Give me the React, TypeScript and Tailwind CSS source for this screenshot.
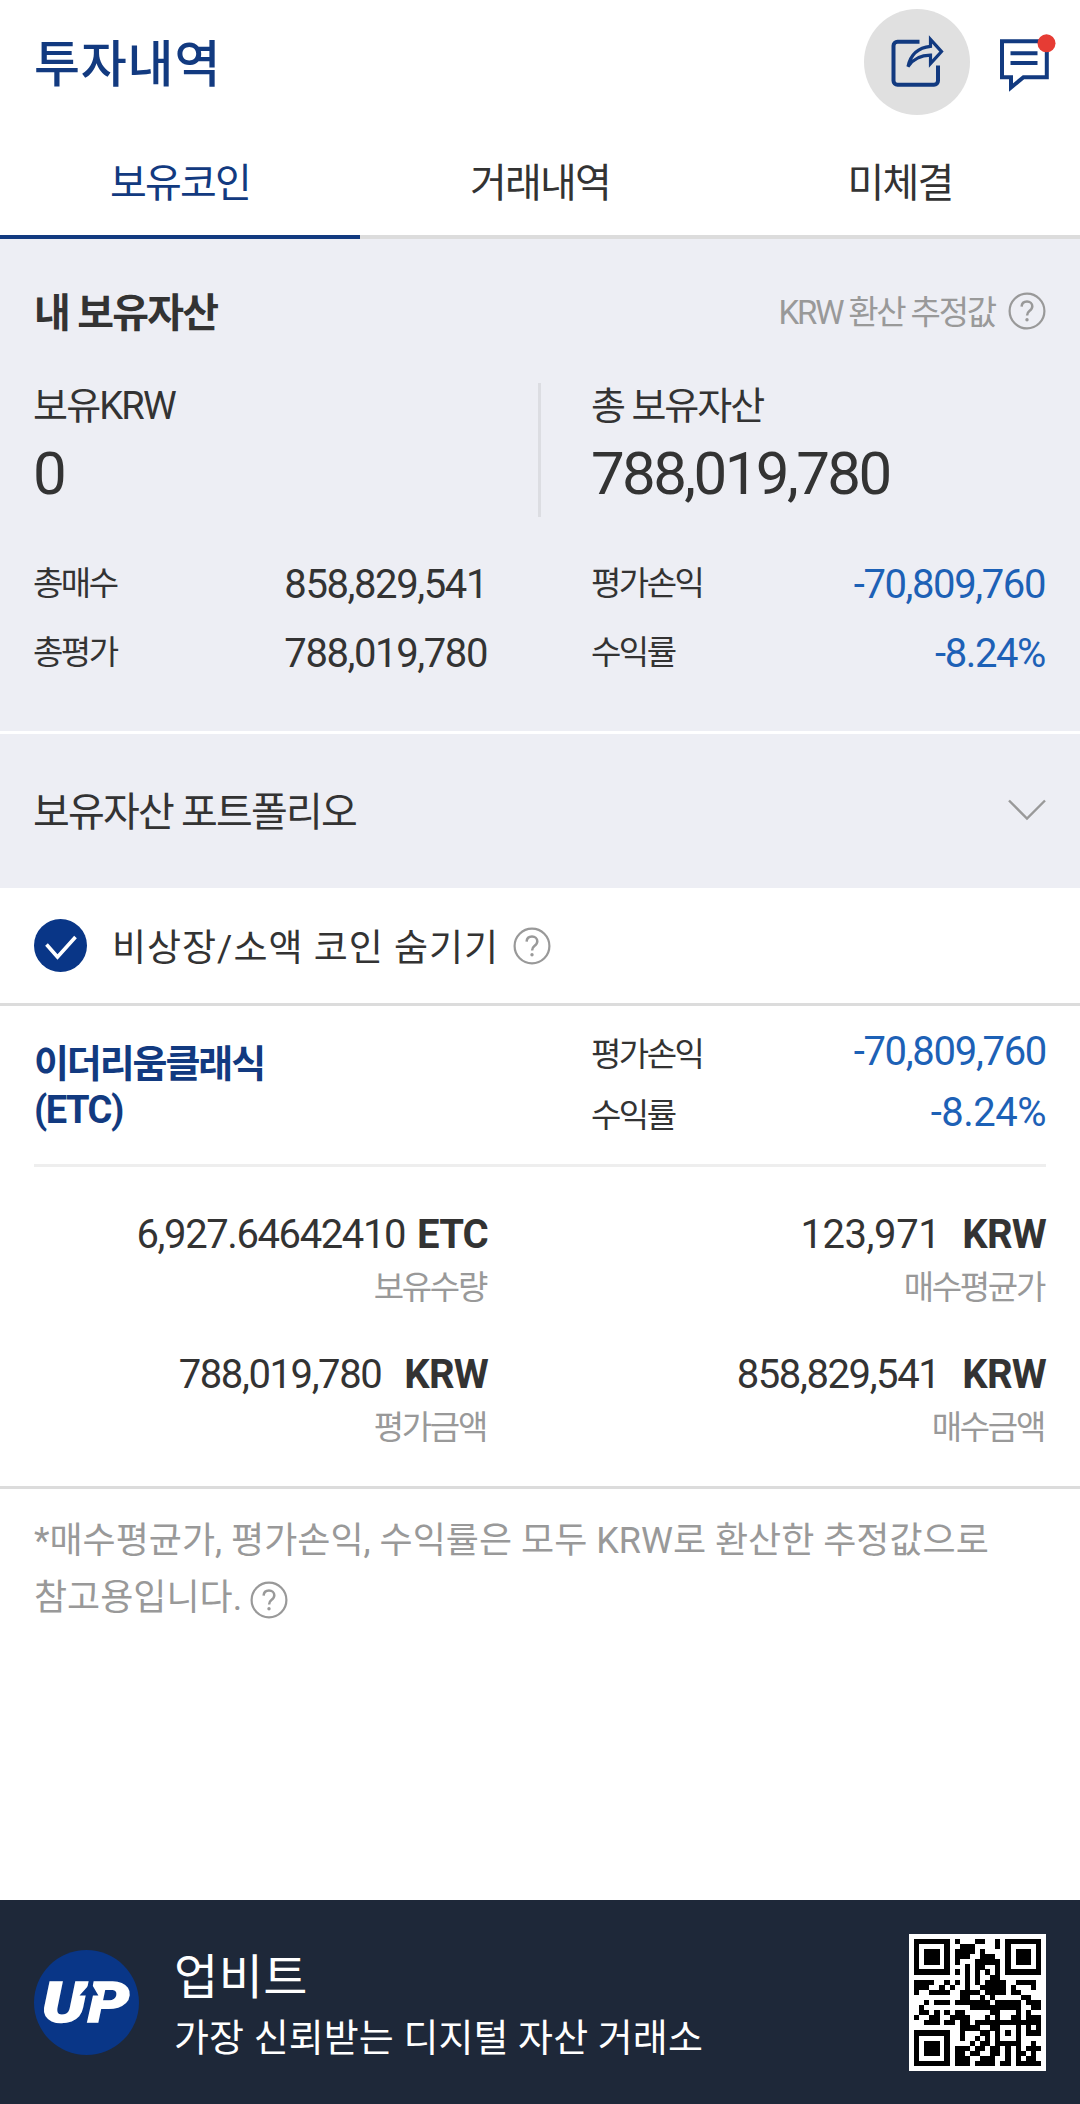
import React from "react";

const QR_ROWS = [
  "#######.#...##..#.#######",
  "#.....#..###....#.#.....#",
  "#.###.#.####.#....#.###.#",
  "#.###.#.###..###..#.###.#",
  "#.###.#.#...#####.#.###.#",
  "#.....#...#.##..#.#.....#",
  "#######.#.#.#.#.#.#######",
  "..........#.#..##........",
  "####..#.#.#.#.####..####.",
  "###..#.#..#..#####.#...#.",
  "#..####..####.####.##....",
  ".........##..#.#.....##..",
  "..#.###.#######.#####.###",
  ".#.........##########..##",
  ".##.#.#.##.....##...#.#..",
  "#..##..####...#.#..##.###",
  "..###.##.##.#############",
  ".........####..##...#.#.#",
  "#######..#...##.#.#.#.###",
  "#.....#..#..#.#.#...#....",
  "#.###.#....#.##.#####..#.",
  "#.###.#.###.##.##.#.#.###",
  "#.###.#.##.##..##.#.##.#.",
  "#.....#.###..###..#.#.##.",
  "#######.###.####.##.#####",
];

function QrCode() {
  return (
    <div className="flex h-[137px] w-[137px] items-center justify-center bg-white">
      <svg width="127" height="127" viewBox="0 0 25 25" shapeRendering="crispEdges">
        {QR_ROWS.map((row, y) =>
          row.split("").map((c, x) =>
            c === "#" ? <rect key={`${x}-${y}`} x={x} y={y} width="1.02" height="1.02" fill="#000" /> : null,
          ),
        )}
      </svg>
    </div>
  );
}

function Help({ className = "" }: { className?: string }) {
  return (
    <svg className={`shrink-0 ${className}`} width="38" height="38" viewBox="0 0 38 38" fill="none" stroke="#999" strokeWidth="2.200">
      <circle cx="19" cy="19" r="17.400" />
      <path d="M13.6 14.6c.2-3.2 2.4-5 5.4-5s5.300 1.900 5.300 4.700c0 2.300-1.200 3.500-2.900 4.700-1.700 1.300-2.300 2.200-2.300 4.400" strokeWidth="2.500" />
      <circle cx="19" cy="27.800" r="1.700" fill="#999" stroke="none" />
    </svg>
  );
}

function ShareIcon() {
  return (
    <svg width="54" height="54" viewBox="0 0 54 54" fill="none" stroke="#123a80" strokeWidth="4">
      <path d="M29.500 6.800H7.500a4 4 0 0 0-4 4v35a4 4 0 0 0 4 4H44a4 4 0 0 0 4-4V30.500" />
      <path d="M40.500 4.500v6.800C28 12.500 20.500 20 18 31.500c5.500-8 12.500-11.300 22.500-11.300v8.500L51.500 16.600z" strokeWidth="3.200" />
    </svg>
  );
}

function ChatIcon() {
  return (
    <svg width="56" height="58" viewBox="0 0 56 58" fill="none" stroke="#123a80" strokeWidth="4">
      <path d="M2 7.200h44.800v36H23.500L11 53.500V43.200H2z" />
      <path d="M10.500 19.200h27M10.500 29h27" />
      <circle cx="46.500" cy="9.300" r="9" fill="#e63c34" stroke="none" />
    </svg>
  );
}

function UpLogo() {
  return (
    <svg width="105" height="105" viewBox="0 0 106 106" className="shrink-0">
      <circle cx="53" cy="53" r="53" fill="#093687" />
      <text
        x="8"
        y="73"
        textLength="88"
        lengthAdjust="spacingAndGlyphs"
        fill="#fff"
        stroke="#fff"
        strokeWidth="1.500"
        className="font-['Roboto'] text-[55px] font-black italic"
      >
        UP
      </text>
      <path d="M57.500 33 65 46h-5.500l-6.500 29h-6L53 46h-7z" fill="#093687" />
    </svg>
  );
}

const label = "-ml-px text-[33px] tracking-[-2.5px]";
const number = "pt-[2px] mr-px text-[40px] tracking-[-1.4px]";

function StatRow({ name, value, blue }: { name: string; value: string; blue?: boolean }) {
  return (
    <div className="flex h-[69px] items-center justify-between">
      <span className={label}>{name}</span>
      <span className={`${number} ${blue ? "text-[#1d61b6]" : ""}`}>{value}</span>
    </div>
  );
}

function Holding({ value, unit, name, style }: { value: string; unit: string; name: string; style: string }) {
  return (
    <div className="flex h-[140px] flex-col items-end">
      <div className="flex h-[56px] items-center pt-[2px]">
        <span className={`text-[40px] ${style}`}>{value}</span>
        <span className="text-[40px] font-bold tracking-[-0.8px]">{unit}</span>
      </div>
      <span className="mr-[2px] flex h-[50px] items-center text-[33px] tracking-[-2.3px] text-[#999]">{name}</span>
    </div>
  );
}

export default function App() {
  return (
    <div className="flex h-[2104px] w-[1080px] flex-col bg-white font-['Roboto','Noto_Sans_CJK_KR',sans-serif] leading-none whitespace-nowrap text-[#333]">
      <header className="flex h-[125px] items-center pr-[24px] pl-[34px]">
        <h1 className="flex-1 pt-[4px] text-[50px] font-medium tracking-[0.8px] text-[#123a80]">투자내역</h1>
        <button className="mr-[30px] mb-[2px] flex h-[106px] w-[106px] items-center justify-center rounded-full bg-[#e0e0e0]">
          <ShareIcon />
        </button>
        <ChatIcon />
      </header>

      <nav className="grid h-[114px] grid-cols-3 text-center text-[40px] tracking-[-1.8px]">
        <span className="flex items-center justify-center border-b-4 border-[#123a80] pt-[8px] text-[#123a80]">보유코인</span>
        <span className="flex items-center justify-center border-b-4 border-[#dcdcdc] pt-[8px]">거래내역</span>
        <span className="flex items-center justify-center border-b-4 border-[#dcdcdc] pt-[8px]">미체결</span>
      </nav>

      <section className="flex h-[492px] flex-col bg-[#edeef4] px-[34px] pt-[43px]">
        <div className="flex h-[58px] items-center justify-between">
          <h2 className="pt-[5px] text-[40px] font-bold tracking-[-1.8px]">내 보유자산</h2>
          <div className="flex items-center text-[#999]">
            <span className="pt-[2px] text-[33px] tracking-[-2.2px]">KRW 환산 추정값</span>
            <Help className="ml-[13px]" />
          </div>
        </div>
        <div className="mt-[43px] flex h-[134px]">
          <div className="flex w-[504px] flex-col">
            <span className="-ml-px flex h-[46px] items-center text-[38px] tracking-[-1.8px]">보유KRW</span>
            <span className="mt-[15px] -ml-px flex h-[60px] items-center text-[60px] tracking-[-2.4px]">0</span>
          </div>
          <div className="w-[3px] bg-[#dcdde2]" />
          <div className="flex flex-col pl-[50px]">
            <span className="flex h-[46px] items-center text-[38px] tracking-[-2px]">총 보유자산</span>
            <span className="mt-[15px] flex h-[60px] items-center text-[60px] tracking-[-2.6px]">788,019,780</span>
          </div>
        </div>
        <div className="mt-[32px] grid grid-cols-2 gap-x-[104px]">
          <StatRow name="총매수" value="858,829,541" />
          <StatRow name="평가손익" value="-70,809,760" blue />
          <StatRow name="총평가" value="788,019,780" />
          <StatRow name="수익률" value="-8.24%" blue />
        </div>
      </section>

      <section className="mt-[3px] flex h-[154px] items-center justify-between bg-[#edeef4] px-[34px]">
        <span className="-ml-px pt-[3px] text-[40px] tracking-[-1.8px]">보유자산 포트폴리오</span>
        <svg width="38" height="22" viewBox="0 0 38 22" fill="none" stroke="#999" strokeWidth="2.400" className="-mt-[2px]">
          <path d="M1 1.500l18 18 18-18" />
        </svg>
      </section>

      <div className="flex h-[118px] items-center border-b-[3px] border-[#dcdcdc] pl-[34px]">
        <svg width="53" height="53" viewBox="0 0 53 53" fill="none">
          <circle cx="26.500" cy="26.500" r="26.500" fill="#093687" />
          <path d="M12.500 25.500l11 12.500L41.500 18" stroke="#fff" strokeWidth="3.600" />
        </svg>
        <span className="ml-[25px] pt-[6px] text-[37px] tracking-[1px]">비상장/소액 코인 숨기기</span>
        <Help className="ml-[14px]" />
      </div>

      <section className="px-[34px]">
        <div className="flex h-[161px] border-b-[3px] border-[#eee]">
          <div className="w-[558px] pt-[35px] text-[38px] leading-[46px] font-bold tracking-[-2.1px] text-[#123a80]">
            이더리움클래식
            <br />
            <span className="tracking-[-1.5px]">(ETC)</span>
          </div>
          <div className="flex flex-1 flex-col pt-[14px]">
            <div className="flex h-[61px] items-center justify-between">
              <span className={`pt-[8px] ${label}`}>평가손익</span>
              <span className="pt-[2px] text-[40px] tracking-[-1.3px] text-[#1d61b6]">-70,809,760</span>
            </div>
            <div className="flex h-[61px] items-center justify-between">
              <span className={`pt-[8px] ${label}`}>수익률</span>
              <span className="pt-[2px] text-[40px] tracking-[-0.5px] text-[#1d61b6]">-8.24%</span>
            </div>
          </div>
        </div>
        <div className="grid h-[319px] grid-cols-2 content-start gap-x-[104px] pt-[39px]">
          <Holding value="6,927.64642410" unit="ETC" name="보유수량" style="mr-[12px] tracking-[-1.4px]" />
          <Holding value="123,971" unit="KRW" name="매수평균가" style="mr-[22px] tracking-[-0.4px]" />
          <Holding value="788,019,780" unit="KRW" name="평가금액" style="mr-[23px] tracking-[-1.4px]" />
          <Holding value="858,829,541" unit="KRW" name="매수금액" style="mr-[23px] tracking-[-1.4px]" />
        </div>
      </section>

      <p className="flex-1 border-t-[3px] border-[#dcdcdc] px-[34px] pt-[24px] text-[36px] leading-[57px] text-[#999]">
        *매수평균가, 평가손익, 수익률은 모두 KRW로 환산한 추정값으로
        <br />
        <span className="flex items-center">
          참고용입니다.
          <Help className="mt-[2px] ml-[8px]" />
        </span>
      </p>

      <footer className="flex h-[204px] items-center bg-[#1e2839] px-[34px] text-white">
        <UpLogo />
        <div className="flex flex-1 flex-col pt-[11px] pl-[35px]">
          <span className="flex h-[60px] items-center text-[48px] tracking-[0.5px]">업비트</span>
          <span className="flex h-[60px] items-center text-[38px] tracking-[0.1px]">가장 신뢰받는 디지털 자산 거래소</span>
        </div>
        <QrCode />
      </footer>
    </div>
  );
}
